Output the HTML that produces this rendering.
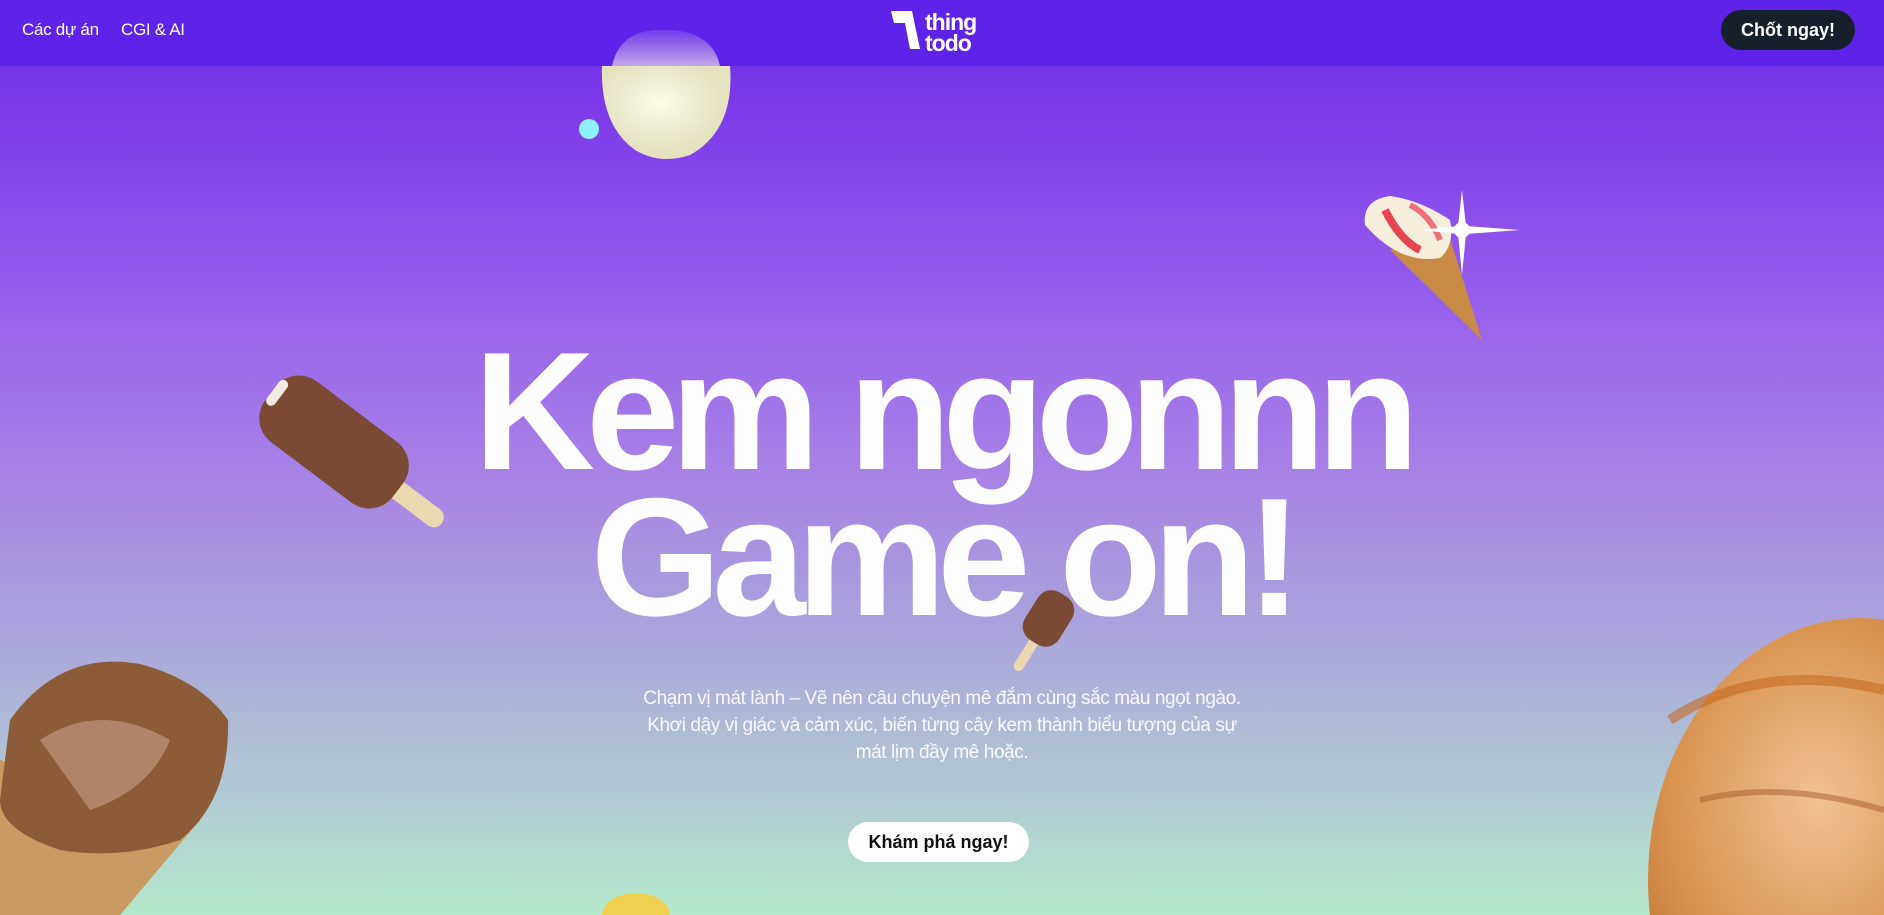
<!DOCTYPE html>
<html><head><meta charset="utf-8"><style>
*{margin:0;padding:0;box-sizing:border-box}
html,body{width:1884px;height:915px;overflow:hidden}
body{position:relative;font-family:"Liberation Sans",sans-serif;background:linear-gradient(180deg,#6a2ae8 0%,#7c3ae9 12%,#9a62ec 35%,#a57fe6 50%,#aaa2dc 68%,#b0c4d4 84%,#b4e8cc 100%)}
.hdr{position:absolute;left:0;top:0;width:1884px;height:66px;background:#5f22e8}
.nav{position:absolute;top:20px;color:#fff;font-size:17px;letter-spacing:-0.3px}
.btn1{position:absolute;left:1721px;top:10px;width:134px;height:40px;border-radius:20px;background:#17202a;color:#fff;font-weight:bold;font-size:18px;text-align:center;line-height:40px}
h1{position:absolute;left:0;top:338px;width:1884px;text-align:center;color:#fdfdfd;font-size:168px;line-height:146px;font-weight:bold;letter-spacing:-9px}
p{position:absolute;left:637px;top:685px;width:610px;text-align:center;color:#fbf8ff;font-size:19px;line-height:27px;letter-spacing:-0.4px}
.btn2{position:absolute;left:848px;top:822px;width:181px;height:40px;border-radius:20px;background:#fff;color:#111;font-weight:bold;font-size:18px;text-align:center;line-height:40px}
svg{position:absolute;left:0;top:0}
</style></head><body>
<div class="hdr"></div>
<svg width="1884" height="915">
<defs>
<radialGradient id="cr" cx="45%" cy="40%"><stop offset="0" stop-color="#fbfbe8"/><stop offset="1" stop-color="#e4e2bf"/></radialGradient>
<radialGradient id="or" cx="40%" cy="35%"><stop offset="0" stop-color="#f0c292"/><stop offset="0.7" stop-color="#d9924f"/><stop offset="1" stop-color="#c07a3a"/></radialGradient>
<linearGradient id="fade" x1="0" y1="0" x2="0" y2="1"><stop offset="0" stop-color="#b9a3ea" stop-opacity="0.2"/><stop offset="1" stop-color="#c0a8ea"/></linearGradient>
</defs>
<path d="M612 66 Q620 28 665 30 Q712 30 720 66 Z" fill="url(#fade)"/>
<path d="M602 66 L730 66 Q735 130 690 155 Q660 165 635 150 Q600 125 602 66Z" fill="url(#cr)"/>
<circle cx="589" cy="129" r="10" fill="#8ff0ff"/>
<path d="M1390 250 L1482 340 L1448 232 Z" fill="#c98a45"/>
<path d="M1365 225 Q1362 200 1390 196 Q1420 200 1450 220 Q1455 245 1440 258 Q1400 265 1365 225Z" fill="#f5eedc"/>
<path d="M1385 210 Q1400 240 1420 250" stroke="#e84450" stroke-width="8" fill="none"/>
<path d="M1410 205 Q1430 215 1440 240" stroke="#ef7078" stroke-width="6" fill="none"/>
<path d="M1462 190 L1466 226 L1520 230 L1466 234 L1462 275 L1458 234 L1420 230 L1458 226Z" fill="#fff"/>
<circle cx="1462" cy="230" r="8" fill="#fff"/>
<ellipse cx="1860" cy="880" rx="212" ry="262" fill="url(#or)"/>
<path d="M1670 720 Q1760 660 1884 690" stroke="#c56a22" stroke-width="10" fill="none" opacity="0.6"/>
<path d="M1700 800 Q1780 780 1884 810" stroke="#a85a2a" stroke-width="6" fill="none" opacity="0.5"/>
<g transform="translate(338 445) rotate(37)">
<rect x="60" y="-10" width="70" height="20" rx="10" fill="#ecd8b0"/>
<rect x="-85" y="-38" width="160" height="76" rx="30" fill="#7a4a34"/>
<rect x="-85" y="-20" width="10" height="30" rx="5" fill="#f2ece0"/>
</g>
<g transform="translate(1040 632) rotate(-58)">
<rect x="-45" y="-5" width="40" height="10" rx="5" fill="#ecd8b0"/>
<rect x="-12" y="-20" width="56" height="40" rx="16" fill="#7a4a34"/>
</g>
<path d="M0 760 L0 915 L120 915 L200 820 Z" fill="#c99a62"/>
<path d="M10 720 Q60 650 140 664 Q200 680 228 720 Q230 800 180 840 Q120 860 60 850 Q0 830 0 800 Z" fill="#8c5b38"/>
<path d="M40 740 Q100 700 170 740 Q150 790 90 810Z" fill="#b08468"/>
<ellipse cx="636" cy="915" rx="34" ry="22" fill="#f0d050"/>
</svg>
<div class="nav" style="left:22px">Các dự án</div>
<div class="nav" style="left:121px">CGI &amp; AI</div>
<svg style="left:890px;top:9px" width="110" height="46">
<path d="M1 2 L22 2 L30 40 L20 40 L15 14 L4 14 Z" fill="#fff"/>
<text x="35" y="21" fill="#fff" font-family="Liberation Sans" font-weight="bold" font-size="23" letter-spacing="-1">thing</text>
<text x="35" y="42" fill="#fff" font-family="Liberation Sans" font-weight="bold" font-size="23" letter-spacing="-1">todo</text>
</svg>
<div class="btn1">Chốt ngay!</div>
<h1>Kem ngonnn<br>Game on!</h1>
<p>Chạm vị mát lành – Vẽ nên câu chuyện mê đắm cùng sắc màu ngọt ngào. Khơi dậy vị giác và cảm xúc, biến từng cây kem thành biểu tượng của sự mát lịm đầy mê hoặc.</p>
<div class="btn2">Khám phá ngay!</div>
</body></html>
